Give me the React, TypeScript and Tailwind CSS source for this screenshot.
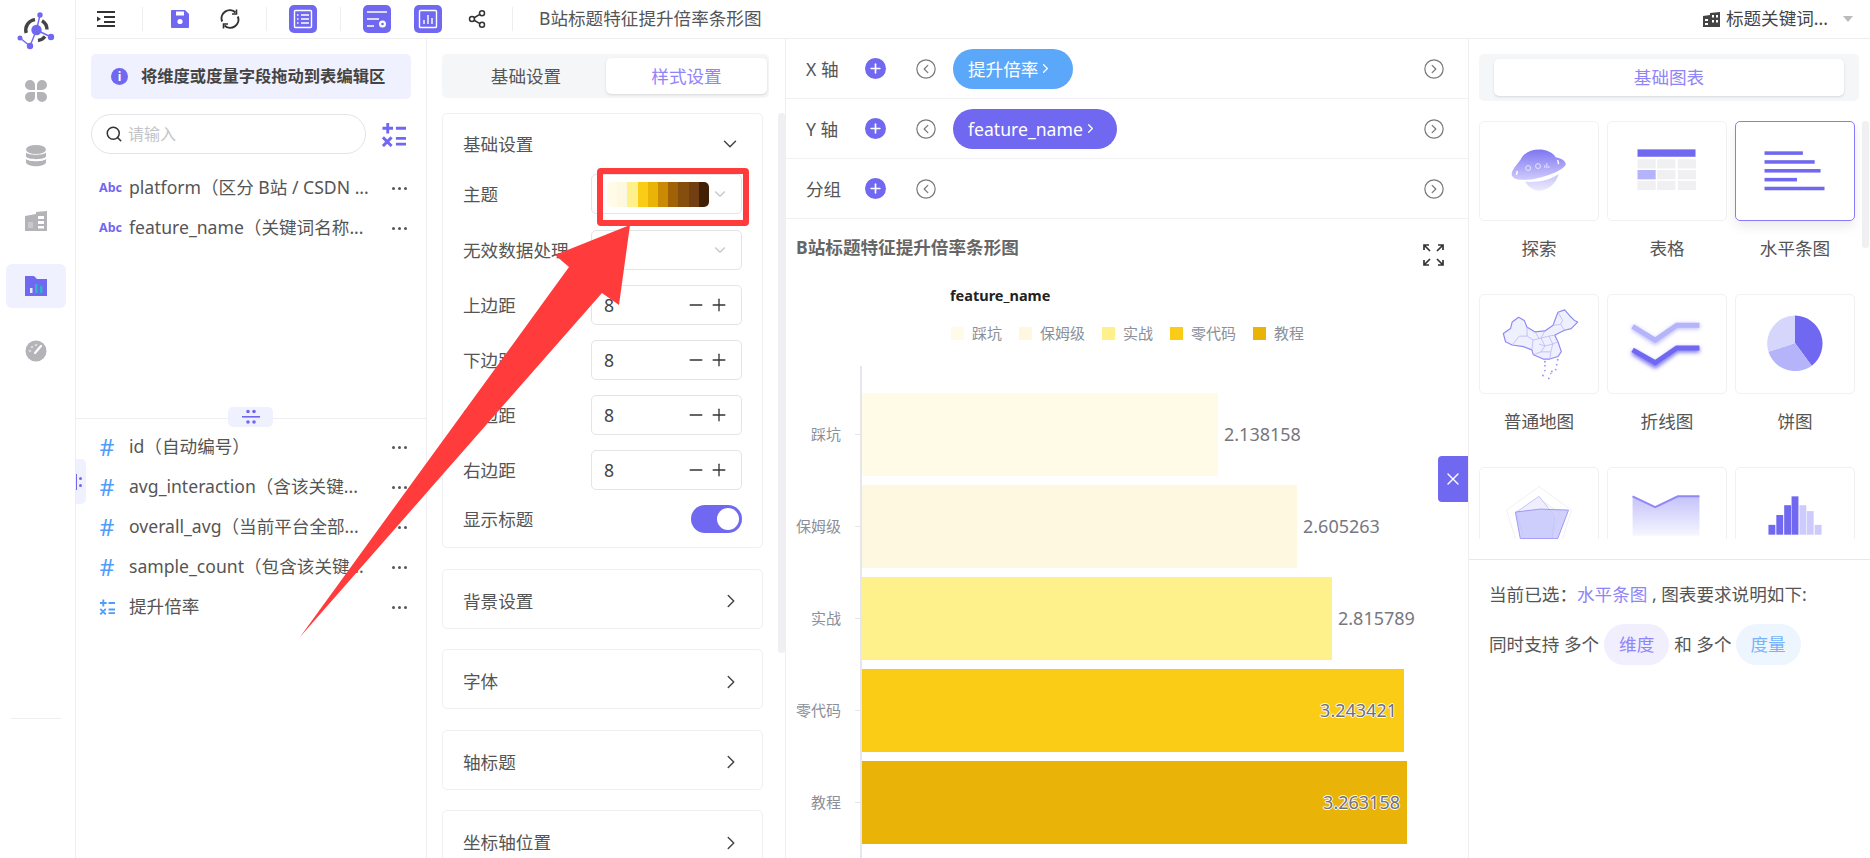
import React from 'react';
import { ChevronDown, ChevronRight, Plus, Minus, X, Search, CircleChevronLeft, CircleChevronRight, Share2 } from 'lucide-react';

const P = '#7068f0';

function Logo() {
  return (
    <svg width="40" height="40" viewBox="0 0 40 40">
      <g stroke={P} strokeWidth="1.4"><path d="M20.5 20L24 5M20.5 20L35 27M20.5 20L14 36M14 36L4 28" /></g>
      <path d="M10.2 23A10.5 10.5 0 0 1 19 9.6" fill="none" stroke="#444" strokeWidth="3.4" />
      <path d="M26 10.8A10.5 10.5 0 0 1 31 19.5" fill="none" stroke="#444" strokeWidth="3.4" />
      <path d="M22 30.5A10.5 10.5 0 0 0 29 26.5" fill="none" stroke="#444" strokeWidth="3.4" />
      <circle cx="20.5" cy="20" r="5.2" fill={P} />
      <circle cx="24" cy="5" r="2.7" fill={P} /><circle cx="35" cy="27" r="3.2" fill={P} /><circle cx="14" cy="36" r="3.2" fill={P} /><circle cx="4" cy="28" r="2.5" fill={P} />
    </svg>
  );
}

function Clover() {
  return (
    <svg width="22" height="22" viewBox="0 0 22 22" fill="#b3b3b8">
      <path d="M5 0a5 5 0 0 1 5 5v5H5A5 5 0 0 1 5 0ZM17 0a5 5 0 0 1 0 10h-5V5a5 5 0 0 1 5-5ZM5 12h5v5a5 5 0 1 1-5-5ZM12 12h5a5 5 0 1 1-5 5Z" />
    </svg>
  );
}
function Db() {
  return (
    <svg width="22" height="22" viewBox="0 0 22 22" fill="#b3b3b8">
      <ellipse cx="11" cy="4.5" rx="10" ry="4.5" />
      <path d="M1 7.5C3 10.5 19 10.5 21 7.5V11.5C19 15 3 15 1 11.5Z" />
      <path d="M1 14C3 17 19 17 21 14V17.5C19 22.5 3 22.5 1 17.5Z" />
    </svg>
  );
}
function Board() {
  return (
    <svg width="22" height="20" viewBox="0 0 22 20">
      <path d="M0 5L11 3V1L22 0V20H0Z" fill="#b3b3b8" />
      <rect x="3" y="11" width="5" height="6" fill="#c9c9cd" />
      <rect x="13" y="5" width="6" height="3" fill="#fff" /><rect x="13" y="10" width="6" height="3" fill="#fff" /><rect x="13" y="15" width="6" height="2.5" fill="#fff" />
    </svg>
  );
}
function FolderChart() {
  return (
    <svg width="22" height="20" viewBox="0 0 22 20">
      <path d="M0 0H9L12 3H22V20H0Z" fill={P} />
      <rect x="5" y="12" width="2.5" height="5" fill="#e8e8ff" />
      <rect x="10" y="8" width="2.5" height="9" fill="#2bb5c5" />
      <rect x="15" y="10" width="2.5" height="7" fill="#2bb5c5" />
    </svg>
  );
}
function Dial() {
  return (
    <svg width="22" height="22" viewBox="0 0 22 22">
      <circle cx="11" cy="11" r="10.5" fill="#b3b3b8" />
      <path d="M10 13L16 6" stroke="#fff" strokeWidth="2.2" strokeLinecap="round" />
      <circle cx="5" cy="11" r="1.3" fill="#d8d8dc" /><circle cx="7" cy="7" r="1.3" fill="#d8d8dc" /><circle cx="11" cy="5" r="1.3" fill="#d8d8dc" />
    </svg>
  );
}

function Sep() {
  return <div className="w-px h-[24px] bg-[#eeeef0]" />;
}

function PurpleBtn({ children, className }: { children: React.ReactNode; className: string }) {
  return <div className={`w-[28px] h-[28px] rounded-[5px] bg-[#7068f0] flex items-center justify-center ${className}`}>{children}</div>;
}

function TopBar() {
  return (
    <div className="h-[39px] border-b border-[#eeeef0] flex items-center shrink-0 text-[#444]">
      <svg className="ml-[21px]" width="18" height="18" viewBox="0 0 18 18" fill="#333">
        <rect x="0" y="1" width="18" height="2" /><rect x="7" y="6" width="11" height="2" /><rect x="7" y="11" width="11" height="2" /><rect x="0" y="15" width="18" height="2" /><path d="M0 6.5L4 9L0 11.5Z" />
      </svg>
      <div className="ml-[27px]"><Sep /></div>
      <svg className="ml-[28px]" width="18" height="18" viewBox="0 0 18 18" fill={P}>
        <path d="M1 0H14L18 4V17a1 1 0 0 1-1 1H1a1 1 0 0 1-1-1V1a1 1 0 0 1 1-1Z" />
        <rect x="5" y="1.5" width="8" height="4" fill="#fff" /><circle cx="9" cy="11.5" r="2.6" fill="#fff" />
      </svg>
      <svg className="ml-[31px]" width="20" height="20" viewBox="0 0 20 20" fill="none" stroke="#333" strokeWidth="2">
        <path d="M2.2 12.5A8.2 8.2 0 0 1 15.5 3.5" /><path d="M17.8 7.5A8.2 8.2 0 0 1 4.5 16.5" />
        <path d="M16.5 0.5V5H12" fill="none" strokeWidth="1.6" /><path d="M3.5 19.5V15H8" fill="none" strokeWidth="1.6" />
      </svg>
      <div className="ml-[26px]"><Sep /></div>
      <PurpleBtn className="ml-[22px]">
        <svg width="20" height="20" viewBox="0 0 20 20" fill="none" stroke="#fff" strokeWidth="1.4">
          <rect x="1.5" y="1.5" width="17" height="17" rx="1" />
          <path d="M4 6H5.5M8 6H16M4 10H5.5M8 10H16M4 14H5.5M8 14H16" />
        </svg>
      </PurpleBtn>
      <div className="ml-[23px]"><Sep /></div>
      <PurpleBtn className="ml-[22px]">
        <svg width="22" height="20" viewBox="0 0 22 20" fill="none" stroke="#fff" strokeWidth="1.6">
          <path d="M1 3H21M1 10H13M1 17H8" />
          <circle cx="16.5" cy="15" r="2.4" strokeWidth="2.2" />
        </svg>
      </PurpleBtn>
      <PurpleBtn className="ml-[23px]">
        <svg width="20" height="20" viewBox="0 0 20 20" fill="none" stroke="#fff" strokeWidth="1.4">
          <rect x="1.5" y="1.5" width="17" height="17" rx="1" />
          <path d="M6 15V11M10 15V6M14 15V9" />
        </svg>
      </PurpleBtn>
      <Share2 className="ml-[25px]" size={20} color="#333" strokeWidth={1.8} />
      <div className="ml-[25px]"><Sep /></div>
      <span className="ml-[26px] text-[17.6px] leading-none text-[#555]">B站标题特征提升倍率条形图</span>
      <div className="ml-auto flex items-center">
        <svg width="17" height="15" viewBox="0 0 17 15" fill="#444">
          <path d="M0 4L7 3V1L17 0V15H0Z" />
          <rect x="2" y="7" width="3" height="2" fill="#fff" /><rect x="2" y="11" width="3" height="2" fill="#fff" />
          <rect x="9" y="3" width="2" height="2.5" fill="#fff" /><rect x="13" y="3" width="2" height="2.5" fill="#fff" /><rect x="9" y="8" width="2" height="2.5" fill="#fff" /><rect x="13" y="8" width="2" height="2.5" fill="#fff" />
        </svg>
        <span className="ml-[6px] text-[17.6px] leading-none text-[#444]">标题关键词...</span>
        <svg className="ml-[15px] mr-[17px]" width="10" height="6" viewBox="0 0 10 6" fill="#bbb"><path d="M0 0H10L5 6Z" /></svg>
      </div>
    </div>
  );
}

function CalcIcon({ size, color }: { size: number; color: string }) {
  return (
    <svg width={size} height={size} viewBox="0 0 26 26" fill="none" stroke={color} strokeWidth="3">
      <path d="M7 1V12M1.5 6.5H12.5M15.5 6.5H26M2 16L11 25M11 16L2 25M15.5 17H26M15.5 23H26" />
    </svg>
  );
}
function Hash() {
  return <span className="w-[16px] text-center text-[23px] leading-none text-[#4f9df8]">#</span>;
}
function Dots() {
  return (
    <div className="flex gap-[3px]">
      <span className="w-[3px] h-[3px] rounded-full bg-[#555]" /><span className="w-[3px] h-[3px] rounded-full bg-[#555]" /><span className="w-[3px] h-[3px] rounded-full bg-[#555]" />
    </div>
  );
}
function FieldRow({ icon, text }: { icon: React.ReactNode; text: string }) {
  return (
    <div className="h-[40px] flex items-center">
      <div className="w-[38px] pl-[8px] flex items-center shrink-0">{icon}</div>
      <span className="text-[17.6px] leading-none text-[#555] whitespace-nowrap">{text}</span>
      <div className="ml-auto mr-[4px]"><Dots /></div>
    </div>
  );
}
const Abc = <span className="text-[12.5px] font-bold leading-none text-[#7068f0]">Abc</span>;

function LeftPanel() {
  return (
    <div className="w-[351px] border-r border-[#eeeef0] shrink-0 relative flex flex-col">
      <div className="h-[380px] border-b border-[#eeeef0] pt-[15px] px-[15px]">
        <div className="h-[45px] rounded-[5px] bg-[#f0f1fe] flex items-center pl-[20px]">
          <span className="w-[17px] h-[17px] rounded-full bg-[#7068f0] text-white text-[12px] font-bold flex items-center justify-center">i</span>
          <span className="ml-[13px] text-[16.3px] font-bold text-[#444] whitespace-nowrap">将维度或度量字段拖动到表编辑区</span>
        </div>
        <div className="mt-[15px] flex items-center">
          <div className="w-[275px] h-[40px] rounded-full border border-[#e4e4e8] flex items-center pl-[13px]">
            <Search size={18} color="#333" strokeWidth={2} />
            <span className="ml-[5px] text-[16px] text-[#c4c4c8]">请输入</span>
          </div>
          <div className="ml-[15px]"><CalcIcon size={25} color={P} /></div>
        </div>
        <div className="mt-[14px]">
          <FieldRow icon={Abc} text="platform（区分 B站 / CSDN ..." />
          <FieldRow icon={Abc} text="feature_name（关键词名称..." />
        </div>
      </div>
      <div className="absolute left-[152px] top-[368px] w-[45px] h-[20px] rounded-[5px] bg-[#f0f1fe] flex items-center justify-center">
        <svg width="18" height="16" viewBox="0 0 18 16" fill={P}>
          <circle cx="6" cy="2.5" r="1.8" /><circle cx="12" cy="2.5" r="1.8" /><rect x="0" y="7" width="18" height="1.6" /><circle cx="6" cy="13" r="1.8" /><circle cx="12" cy="13" r="1.8" />
        </svg>
      </div>
      <div className="pt-[8px] px-[15px]">
        <FieldRow icon={<Hash />} text="id（自动编号）" />
        <FieldRow icon={<Hash />} text="avg_interaction（含该关键..." />
        <FieldRow icon={<Hash />} text="overall_avg（当前平台全部..." />
        <FieldRow icon={<Hash />} text="sample_count（包含该关键..." />
        <FieldRow icon={<CalcIcon size={16} color="#4f9df8" />} text="提升倍率" />
      </div>
      <div className="absolute left-0 top-[420px] w-[10px] h-[45px] rounded-r-[5px] bg-[#f0f1fe] flex items-center gap-[1px]">
        <span className="w-[1px] h-[16px] bg-[#7068f0]" />
        <div className="flex flex-col gap-[4px] ml-[1px]"><span className="w-[3px] h-[3px] rounded-full bg-[#7068f0]" /><span className="w-[3px] h-[3px] rounded-full bg-[#7068f0]" /></div>
      </div>
    </div>
  );
}

function Sel({ children, mb }: { children?: React.ReactNode; mb: string }) {
  return (
    <div className={`w-[151px] h-[40px] rounded-[5px] border border-[#e4e4e8] flex items-center pl-[15px] pr-[12px] ${mb}`}>
      {children}
      <ChevronDown className="ml-auto" size={18} color="#c4c4c8" strokeWidth={1.5} />
    </div>
  );
}
function NumBox({ mb }: { mb: string }) {
  return (
    <div className={`w-[151px] h-[40px] rounded-[5px] border border-[#e4e4e8] flex items-center pl-[12px] pr-[12px] ${mb}`}>
      <span className="text-[17.6px] text-[#444]">8</span>
      <Minus className="ml-auto" size={20} color="#333" strokeWidth={1.6} />
      <Plus className="ml-[3px]" size={20} color="#333" strokeWidth={1.6} />
    </div>
  );
}
function Line({ label, children }: { label: string; children: React.ReactNode }) {
  return (
    <div className="flex items-start justify-between">
      <span className="text-[17.6px] leading-[40px] text-[#555] whitespace-nowrap">{label}</span>
      {children}
    </div>
  );
}
function Closed({ label }: { label: string }) {
  return (
    <div className="mt-[20.5px] w-[321px] h-[60px] shrink-0 rounded-[5px] border border-[#f0f0f2] flex items-center pl-[20px] pr-[20px] pt-[5px]">
      <span className="text-[17.6px] text-[#555]">{label}</span>
      <ChevronRight className="ml-auto" size={22} color="#444" strokeWidth={1.6} />
    </div>
  );
}

const swatches = ['bg-[#fffbe6]', 'bg-[#fef8e1]', 'bg-[#fef08a]', 'bg-[#facc15]', 'bg-[#eab308]', 'bg-[#ca8a04]', 'bg-[#a16207]', 'bg-[#854d0e]', 'bg-[#713f12]', 'bg-[#422006]'];

function SettingsPanel() {
  return (
    <div className="w-[359px] border-r border-[#eeeef0] shrink-0 relative pl-[15px] pt-[15px] overflow-hidden">
      <div className="w-[327px] h-[44px] rounded-[5px] bg-[#f5f6f8] flex items-center pr-[2px]">
        <span className="w-[168px] text-center text-[17.6px] text-[#555]">基础设置</span>
        <span className="w-[161px] h-[36px] -ml-[4px] rounded-[5px] bg-white shadow-sm text-center leading-[36px] text-[17.6px] text-[#8f85f8]">样式设置</span>
      </div>
      <div className="mt-[15px] w-[321px] rounded-[5px] border border-[#f0f0f2] px-[20px] pt-[10px] pb-[14px]">
        <div className="h-[40px] flex items-center pr-[1px]">
          <span className="text-[17.6px] text-[#555]">基础设置</span>
          <ChevronDown className="ml-auto" size={22} color="#444" strokeWidth={1.6} />
        </div>
        <div className="mt-[10px]">
          <Line label="主题">
            <Sel mb="mb-[16px]">
              <div className="flex h-[25px] rounded-[5px] overflow-hidden">
                {swatches.map((c) => <span key={c} className={`w-[10.2px] ${c}`} />)}
              </div>
            </Sel>
          </Line>
          <Line label="无效数据处理"><Sel mb="mb-[15px]" /></Line>
          <Line label="上边距"><NumBox mb="mb-[15px]" /></Line>
          <Line label="下边距"><NumBox mb="mb-[15px]" /></Line>
          <Line label="左边距"><NumBox mb="mb-[15px]" /></Line>
          <Line label="右边距"><NumBox mb="mb-[15px]" /></Line>
          <div className="h-[28px] flex items-center justify-between">
            <span className="text-[17.6px] text-[#555]">显示标题</span>
            <div className="w-[51px] h-[28px] rounded-full bg-[#7068f0] flex items-center justify-end pr-[3px]">
              <span className="w-[22px] h-[22px] rounded-full bg-white" />
            </div>
          </div>
        </div>
      </div>
      <Closed label="背景设置" />
      <Closed label="字体" />
      <Closed label="轴标题" />
      <Closed label="坐标轴位置" />
      <div className="absolute right-0 top-[74px] w-[7px] h-[540px] rounded-[3px] bg-[#f0f0f3]" />
    </div>
  );
}

function AxisRow({ label, pill, pillClass }: { label: string; pill?: string; pillClass?: string }) {
  return (
    <div className="h-[60px] border-b border-[#f1f1f3] flex items-center pl-[20px]">
      <span className="w-[59px] pt-[1px] text-[17.6px] text-[#555] whitespace-nowrap">{label}</span>
      <div className="w-[21px] h-[21px] rounded-full bg-[#7068f0] flex items-center justify-center"><Plus size={15} color="#fff" strokeWidth={2.6} /></div>
      <CircleChevronLeft className="ml-[29px]" size={22} color="#777" strokeWidth={1.3} />
      {pill && (
        <div className={`ml-[16px] h-[40px] rounded-full flex items-center pl-[15px] pr-[12px] text-[17.6px] text-white ${pillClass}`}>
          <span className="whitespace-nowrap pt-[1px]">{pill}</span>
          <ChevronRight size={15} color="#fff" strokeWidth={2} />
        </div>
      )}
      <CircleChevronRight className="ml-auto mr-[23px]" size={22} color="#777" strokeWidth={1.3} />
    </div>
  );
}

function Legend({ color, label, ml }: { color: string; label: string; ml: string }) {
  return (
    <div className={`flex items-center ${ml}`}>
      <span className={`w-[13px] h-[13px] ${color}`} />
      <span className="ml-[8px] text-[15px] leading-none text-[#8a8f99] whitespace-nowrap">{label}</span>
    </div>
  );
}

const bars = [
  { label: '踩坑', value: '2.138158', w: 'w-[356px]', c: 'bg-[#fffbe6]', inside: false },
  { label: '保姆级', value: '2.605263', w: 'w-[435px]', c: 'bg-[#fef8e1]', inside: false },
  { label: '实战', value: '2.815789', w: 'w-[470px]', c: 'bg-[#fef08a]', inside: false },
  { label: '零代码', value: '3.243421', w: 'w-[542px]', c: 'bg-[#facc15]', inside: true },
  { label: '教程', value: '3.263158', w: 'w-[545px]', c: 'bg-[#eab308]', inside: true },
];

function MiddlePanel() {
  return (
    <div className="w-[683px] border-r border-[#eeeef0] shrink-0 overflow-hidden">
      <AxisRow label="X 轴" pill="提升倍率" pillClass="bg-[#5ba8fb] w-[120px]" />
      <AxisRow label="Y 轴" pill="feature_name" pillClass="bg-[#7068f0] w-[164px]" />
      <AxisRow label="分组" />
      <div className="pt-[16px] pl-[10px] h-[28px] box-content flex items-start">
        <span className="text-[17.6px] leading-[24px] font-bold text-[#666] whitespace-nowrap">B站标题特征提升倍率条形图</span>
        <svg className="ml-auto mr-[24px] mt-[9px]" width="21" height="22" viewBox="0 0 21 22" fill="none" stroke="#333" strokeWidth="1.7">
          <path d="M1 6V1H6M1 1L7 7M20 6V1H15M20 1L14 7M1 16V21H6M1 21L7 15M20 16V21H15M20 21L14 15" />
        </svg>
      </div>
      <div className="mt-[21px] ml-[164px] text-[14.5px] leading-[22px] font-bold text-[#222]">feature_name</div>
      <div className="mt-[17px] ml-[165px] h-[20px] flex items-center">
        <Legend color="bg-[#fffbe6]" label="踩坑" ml="" />
        <Legend color="bg-[#fef8e1]" label="保姆级" ml="ml-[17px]" />
        <Legend color="bg-[#fef08a]" label="实战" ml="ml-[17px]" />
        <Legend color="bg-[#facc15]" label="零代码" ml="ml-[17px]" />
        <Legend color="bg-[#eab308]" label="教程" ml="ml-[17px]" />
      </div>
      <div className="mt-[23px] flex h-[492px]">
        <div className="w-[74px] shrink-0 pt-[27px] flex flex-col gap-[9.5px]">
          {bars.map((b) => (
            <div key={b.label} className="h-[82.5px] flex items-center justify-end">
              <span className="text-[15px] text-[#8a8f99] whitespace-nowrap">{b.label}</span>
              <span className="ml-[14px] w-[5px] h-px bg-[#e4e4ea]" />
            </div>
          ))}
        </div>
        <div className="border-l-[2px] border-[#e6e6ee] pt-[27px] flex flex-col gap-[9.5px]">
          {bars.map((b) => (
            <div key={b.label} className="h-[82.5px] flex items-center">
              <div className={`h-full ${b.w} ${b.c} flex items-center justify-end pr-[7px]`}>
                {b.inside && <span className="text-[18px] text-[#6f6f78] [text-shadow:-1px_0_#fff,1px_0_#fff,0_-1px_#fff,0_1px_#fff]">{b.value}</span>}
              </div>
              {!b.inside && <span className="ml-[6px] text-[18px] text-[#77777f]">{b.value}</span>}
            </div>
          ))}
        </div>
      </div>
    </div>
  );
}

function Explore() {
  return (
    <svg width="120" height="100" viewBox="0 0 120 100">
      <defs>
        <linearGradient id="pl" x1="0" y1="0" x2="0" y2="1"><stop offset="0" stopColor="#7f76f2" /><stop offset="1" stopColor="#cfccfb" /></linearGradient>
        <linearGradient id="pl2" x1="0" y1="0" x2="0" y2="1"><stop offset="0" stopColor="#c5c2fa" /><stop offset="1" stopColor="#ebeafe" /></linearGradient>
      </defs>
      <path d="M33 50C36 44 40 41 42 37C48 26 70 25 77 36C83 37 88 40 87 44C84 50 60 60 42 59C36 59 30 56 33 50Z" fill="url(#pl)" />
      <path d="M46 61C60 62 74 58 80 53C77 64 68 70 60 70C54 70 49 66 46 61Z" fill="url(#pl2)" />
      <g fill="none" stroke="#e8e7fd" strokeWidth="1"><circle cx="49" cy="47" r="2.5" /><circle cx="59" cy="45" r="2.5" /><path d="M66 47V44M68 47V42M70 47V45" /></g>
      <path d="M38 50L37 54" stroke="#fff" strokeWidth="1.5" /><path d="M79 39L80 43" stroke="#fff" strokeWidth="1.5" />
    </svg>
  );
}
function TableIco() {
  const rows = [38, 49, 60];
  const cols = [30, 50, 71];
  return (
    <svg width="120" height="100" viewBox="0 0 120 100">
      <rect x="30" y="28" width="59" height="7.5" fill={P} />
      {rows.map((y) => cols.map((x) => (
        <rect key={`${x}-${y}`} x={x} y={y} width="18.5" height="9.5" fill={x === 30 && y === 49 ? '#b5b4fb' : '#f0f0f3'} />
      )))}
    </svg>
  );
}
function BarIco() {
  return (
    <svg width="120" height="100" viewBox="0 0 120 100" fill={P}>
      <rect x="29" y="30" width="39" height="3.6" /><rect x="29" y="39" width="51" height="3.6" /><rect x="29" y="48" width="57" height="3.6" /><rect x="29" y="57" width="33" height="3.6" /><rect x="29" y="66" width="61" height="3.6" />
    </svg>
  );
}
function MapIco() {
  return (
    <svg width="120" height="100" viewBox="0 0 120 100">
      <path d="M23.7 39.3L31 34.3L32.7 27.7L39.3 22.7L45 26L47.7 32.7L56 37.7L66 36.7L74.3 31L76.7 24.3L79.3 17.7L86 15.3L91 21L96 26L99.3 27.7L92.7 34.3L86 36L79.3 39.3L76 41L79.3 47.7L82.7 57.7L79.3 62.7L71 65.3L64.3 65.3L54.3 61L52.7 56L44.3 52.7L32.7 51L26 47.7Z" fill="#eff0fe" stroke="#8f88f5" strokeWidth="1.2" strokeLinejoin="round" />
      <g fill="none" stroke="#b9b5fa" strokeWidth="0.8">
        <path d="M32.7 51L40 42L48 42L54 46L52.7 56M48 42L47.7 32.7M54 46L62 44L66 36.7M62 44L66 52L62 58L54.3 61M66 52L74 50L79.3 47.7M74 50L72 58L71 65.3M62 44L70 42L76 41M66 52L60 50M62 58L72 58M70 42L74 50M74.3 31L82 30L86 36M79.3 17.7L84 26L82 30M56 37.7L60 44" />
      </g>
      <g fill="#9a94f7">
        <circle cx="66" cy="68" r="1" /><circle cx="66" cy="72" r="0.9" /><circle cx="66" cy="77" r="0.9" /><circle cx="64" cy="82" r="1" /><circle cx="79" cy="66" r="1" /><circle cx="78" cy="71" r="0.9" /><circle cx="77" cy="76" r="0.9" /><circle cx="73" cy="78" r="1" /><circle cx="70" cy="85" r="0.9" /><circle cx="72" cy="80" r="0.8" />
      </g>
    </svg>
  );
}
function LineIco() {
  return (
    <svg width="120" height="100" viewBox="0 0 120 100" fill="none">
      <defs><filter id="bl" x="-30%" y="-60%" width="160%" height="220%"><feGaussianBlur stdDeviation="2" /></filter></defs>
      <polyline points="25,33 48,48 70,32 93,32" stroke="#b5b4fb" strokeWidth="5" filter="url(#bl)" />
      <polyline points="25,32 48,46 70,31 93,31" stroke="#b5b4fb" strokeWidth="5" />
      <polyline points="25,58 48,72 70,56 93,56" stroke={P} strokeWidth="5" filter="url(#bl)" />
      <polyline points="25,56 48,69 70,54 93,54" stroke={P} strokeWidth="5" />
    </svg>
  );
}
function PieIco() {
  return (
    <svg width="120" height="100" viewBox="0 0 120 100">
      <path d="M60 49L60 21A28.5 28.5 0 0 1 77 72Z" fill={P} />
      <path d="M60 49L77 72A28.5 28.5 0 0 1 33 58Z" fill="#b5b4fb" />
      <path d="M60 49L33 58A28.5 28.5 0 0 1 60 21Z" fill="#d6d5fc" />
    </svg>
  );
}
function RadarIco() {
  return (
    <svg width="120" height="100" viewBox="0 0 120 100">
      <path d="M60 19L93 43L80 85H40L27 43Z" fill="none" stroke="#f0f0f6" />
      <path d="M60 31L81 46L73 70H47L36 46Z" fill="none" stroke="#e6e6f5" />
      <path d="M60 29L76 49L73 75H45L37 45Z" fill="#eeeefe" stroke="#c6c4fb" />
      <path d="M36 45L61 42L90 43L79 72H41Z" fill="#c6c5fb" fillOpacity="0.8" stroke="#9c97f7" />
    </svg>
  );
}
function AreaIco() {
  return (
    <svg width="120" height="100" viewBox="0 0 120 100">
      <defs><linearGradient id="ar" x1="0" y1="0" x2="0" y2="1"><stop offset="0" stopColor="#c5c2fa" /><stop offset="1" stopColor="#f6f6ff" /></linearGradient></defs>
      <path d="M25 29L48 40L71 29H93V69H25Z" fill="url(#ar)" />
      <path d="M25 29L48 40L71 29H93" fill="none" stroke="#9088f5" strokeWidth="2" />
    </svg>
  );
}
function HistIco() {
  return (
    <svg width="120" height="100" viewBox="0 0 120 100">
      <g fill={P}><rect x="33" y="58" width="7" height="10" /><rect x="41" y="48" width="7" height="20" /><rect x="49" y="38" width="7" height="30" /><rect x="56.5" y="29" width="7" height="39" /></g>
      <g fill="#cccbfc"><rect x="64.5" y="38" width="7" height="30" /><rect x="72" y="44" width="7" height="24" /><rect x="80" y="58" width="7" height="10" /></g>
    </svg>
  );
}

function ChartCard({ label, active, children }: { label?: string; active?: boolean; children: React.ReactNode }) {
  return (
    <div className="h-[173px]">
      <div className={`w-[120px] h-[100px] rounded-[5px] border ${active ? 'border-[#867cf6] shadow-[0_6px_12px_rgba(0,0,0,0.08)]' : 'border-[#f1f1f3]'} flex items-center justify-center overflow-hidden`}>
        {children}
      </div>
      {label && <div className="h-[54px] flex items-center justify-center text-[17.6px] text-[#555] whitespace-nowrap">{label}</div>}
    </div>
  );
}

function RightPanel() {
  return (
    <div className="flex-1 min-w-0 relative flex flex-col">
      <div className="h-[521px] border-b border-[#e8e8ea] pt-[15px] pl-[10px] shrink-0">
        <div className="w-[380px] h-[47px] rounded-[5px] bg-[#f5f6f8] flex items-center justify-center">
          <span className="w-[350px] h-[37px] rounded-[5px] bg-white shadow-sm text-center leading-[37px] text-[17.6px] text-[#8f85f8]">基础图表</span>
        </div>
        <div className="mt-[20px] h-[418px] overflow-hidden grid grid-cols-[120px_120px_120px] gap-x-[8px] content-start">
          <ChartCard label="探索"><Explore /></ChartCard>
          <ChartCard label="表格"><TableIco /></ChartCard>
          <ChartCard label="水平条图" active><BarIco /></ChartCard>
          <ChartCard label="普通地图"><MapIco /></ChartCard>
          <ChartCard label="折线图"><LineIco /></ChartCard>
          <ChartCard label="饼图"><PieIco /></ChartCard>
          <ChartCard><RadarIco /></ChartCard>
          <ChartCard><AreaIco /></ChartCard>
          <ChartCard><HistIco /></ChartCard>
        </div>
      </div>
      <div className="pl-[20px] pt-[21px] text-[17.6px] text-[#555]">
        <div className="h-[26px] leading-[26px] whitespace-nowrap">当前已选：<span className="text-[#8f85f8]">水平条图</span> , 图表要求说明如下:</div>
        <div className="mt-[17px] h-[41px] flex items-center whitespace-nowrap">
          <span>同时支持 多个</span>
          <span className="ml-[5px] w-[65px] h-[41px] rounded-full bg-[#f1eefe] text-[#8f85f8] flex items-center justify-center">维度</span>
          <span className="ml-[5px]">和 多个</span>
          <span className="ml-[4px] w-[65px] h-[41px] rounded-full bg-[#edf5ff] text-[#76b3fb] flex items-center justify-center">度量</span>
        </div>
      </div>
      <div className="absolute right-[1px] top-[82px] w-[7px] h-[127px] rounded-[3px] bg-[#f0f0f3]" />
    </div>
  );
}

export default function App() {
  return (
    <div className="relative w-[1870px] h-[858px] overflow-hidden bg-white flex font-['Noto_Sans','Noto_Sans_CJK_SC',sans-serif]">
      <div className="w-[76px] shrink-0 border-r border-[#eeeef0] flex flex-col items-center pt-[10px] pr-[4px]">
        <Logo />
        <div className="mt-[19px] flex flex-col gap-[21px] items-center">
          <div className="w-[60px] h-[44px] flex items-center justify-center"><Clover /></div>
          <div className="w-[60px] h-[44px] flex items-center justify-center"><Db /></div>
          <div className="w-[60px] h-[44px] flex items-center justify-center"><Board /></div>
          <div className="w-[60px] h-[44px] rounded-[6px] bg-[#f0f1fe] flex items-center justify-center"><FolderChart /></div>
          <div className="w-[60px] h-[44px] flex items-center justify-center"><Dial /></div>
        </div>
        <div className="mt-[345px] w-[50px] h-px bg-[#f0f0f2]" />
      </div>
      <div className="flex-1 min-w-0 flex flex-col">
        <TopBar />
        <div className="flex-1 min-h-0 flex">
          <LeftPanel />
          <SettingsPanel />
          <MiddlePanel />
          <RightPanel />
        </div>
      </div>

      <div className="absolute left-[1438px] top-[456px] w-[30px] h-[46px] rounded-l-[4px] bg-[#7068f0] flex items-center justify-center">
        <X size={20} color="#fff" strokeWidth={1.6} />
      </div>

      <div className="absolute left-[597px] top-[168px] w-[152px] h-[58px] rounded-[4px] border-[6px] border-[#ff3b3b]" />
      <svg className="absolute left-0 top-0 pointer-events-none" width="1870" height="858" viewBox="0 0 1870 858">
        <polygon points="630,225 619,305 602,293 300,637 569,267 555,255" fill="#ff3b3b" />
      </svg>
    </div>
  );
}
